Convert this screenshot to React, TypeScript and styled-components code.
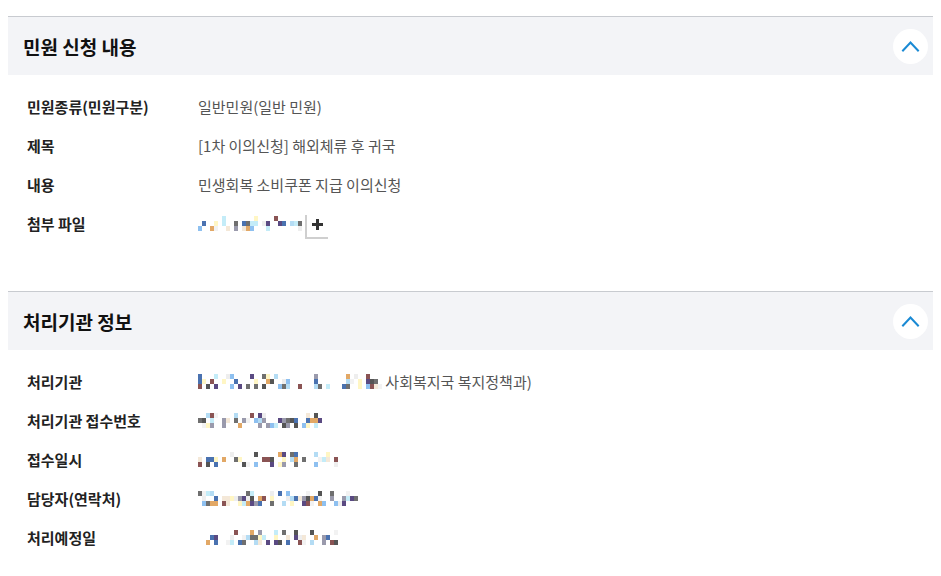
import React from "react";
import styled, { createGlobalStyle } from "styled-components";

const GlobalStyle = createGlobalStyle`
  html, body { background: #ffffff; }
  body {
    margin: 8px;
    font-family: "Noto Sans CJK KR", "Noto Sans", sans-serif;
    color: #222;
  }
`;

const Page = styled.div`
  width: 930px;
  padding-top: 8px;
`;

const Section = styled.section`
  border-top: 1px solid #c8cbd0;
`;

const Header = styled.div`
  height: 58px;
  background: #f3f4f7;
  display: flex;
  align-items: center;
  justify-content: space-between;
  padding: 0 10px 0 15px;
`;

const Title = styled.h2`
  margin: 0;
  font-size: 19px;
  font-weight: 700;
  color: #111;
  letter-spacing: 0;
`;

const ToggleButton = styled.button`
  width: 35px;
  height: 35px;
  border-radius: 50%;
  border: none;
  background: #ffffff;
  padding: 0;
  display: flex;
  align-items: center;
  justify-content: center;
  cursor: pointer;
`;

const Body = styled.div<{ $bottom: number }>`
  padding: 12px 0 ${(p) => p.$bottom}px 19px;
`;

const Row = styled.div`
  display: grid;
  grid-template-columns: 171px 1fr;
  align-items: center;
  height: 39px;
`;

const Label = styled.div`
  font-size: 15px;
  font-weight: 700;
  color: #222;
  line-height: 23px;
`;

const Value = styled.div`
  font-size: 15px;
  color: #555;
  line-height: 23px;
  display: flex;
  align-items: center;
`;

const AttachAdd = styled.span`
  width: 23px;
  height: 24px;
  margin-left: 3px;
  margin-top: 6px;
  border-left: 2px solid #cfcfcf;
  border-bottom: 2px solid #cfcfcf;
  display: flex;
  align-items: flex-start;
  justify-content: center;
  padding-top: 4px;
  box-sizing: border-box;
`;

const Chevron = () => (
  <svg width="35" height="35" viewBox="0 0 35 35" aria-hidden>
    <polyline
      points="10,21.5 17.5,13.5 25,21.5"
      fill="none"
      stroke="#1a8ad4"
      strokeWidth="2"
      strokeLinecap="square"
    />
  </svg>
);

const PlusIcon = () => (
  <svg width="11" height="11" viewBox="0 0 11 11" aria-hidden>
    <rect x="4" y="0" width="3" height="11" fill="#333" />
    <rect x="0" y="4" width="11" height="3" fill="#333" />
  </svg>
);

const palette = [
  "#4a72b0",
  "#8ec0f0",
  "#fff6c4",
  "#555555",
  "#9a9aac",
  "#e2a866",
  "#5a4a82",
  "#c4ecf8",
  "#8a5454",
  "#eeeeee",
  "#b4dcf4",
  "#6f6f6f",
  "#f4e8d8",
  "#f2f2f2",
];

function rng(seed: number) {
  let a = seed >>> 0;
  return () => {
    a = (a + 0x6d2b79f5) >>> 0;
    let t = a;
    t = Math.imul(t ^ (t >>> 15), t | 1);
    t ^= t + Math.imul(t ^ (t >>> 7), t | 61);
    return ((t ^ (t >>> 14)) >>> 0) / 4294967296;
  };
}

const Mosaic: React.FC<{ width: number; seed: number }> = ({ width, seed }) => {
  const r = rng(seed);
  const cols = Math.floor(width / 4);
  const rects: React.ReactElement[] = [];
  const density = [0.25, 0.5, 0.45];
  for (let row = 0; row < 3; row++) {
    for (let c = 0; c < cols; c++) {
      if (r() < density[row]) {
        const color = palette[Math.floor(r() * palette.length)];
        rects.push(
          <rect key={`${row}-${c}`} x={c * 4} y={row * 5} width={4} height={5} fill={color} />
        );
      }
    }
  }
  return (
    <svg width={cols * 4} height={15} viewBox={`0 0 ${cols * 4} 15`} aria-hidden>
      {rects}
    </svg>
  );
};

export default function App() {
  return (
    <>
      <GlobalStyle />
      <Page>
        <Section>
          <Header>
            <Title>민원 신청 내용</Title>
            <ToggleButton aria-label="접기">
              <Chevron />
            </ToggleButton>
          </Header>
          <Body $bottom={48}>
            <Row>
              <Label>민원종류(민원구분)</Label>
              <Value>일반민원(일반 민원)</Value>
            </Row>
            <Row>
              <Label>제목</Label>
              <Value>[1차 이의신청] 해외체류 후 귀국</Value>
            </Row>
            <Row>
              <Label>내용</Label>
              <Value>민생회복 소비쿠폰 지급 이의신청</Value>
            </Row>
            <Row>
              <Label>첨부 파일</Label>
              <Value>
                <Mosaic width={104} seed={11} />
                <AttachAdd>
                  <PlusIcon />
                </AttachAdd>
              </Value>
            </Row>
          </Body>
        </Section>
        <Section>
          <Header>
            <Title>처리기관 정보</Title>
            <ToggleButton aria-label="접기">
              <Chevron />
            </ToggleButton>
          </Header>
          <Body $bottom={10}>
            <Row>
              <Label>처리기관</Label>
              <Value>
                <Mosaic width={184} seed={23} />
                &nbsp;사회복지국 복지정책과)
              </Value>
            </Row>
            <Row>
              <Label>처리기관 접수번호</Label>
              <Value>
                <Mosaic width={128} seed={37} />
              </Value>
            </Row>
            <Row>
              <Label>접수일시</Label>
              <Value>
                <Mosaic width={140} seed={41} />
              </Value>
            </Row>
            <Row>
              <Label>담당자(연락처)</Label>
              <Value>
                <Mosaic width={160} seed={53} />
              </Value>
            </Row>
            <Row>
              <Label>처리예정일</Label>
              <Value>
                <Mosaic width={140} seed={67} />
              </Value>
            </Row>
          </Body>
        </Section>
      </Page>
    </>
  );
}
